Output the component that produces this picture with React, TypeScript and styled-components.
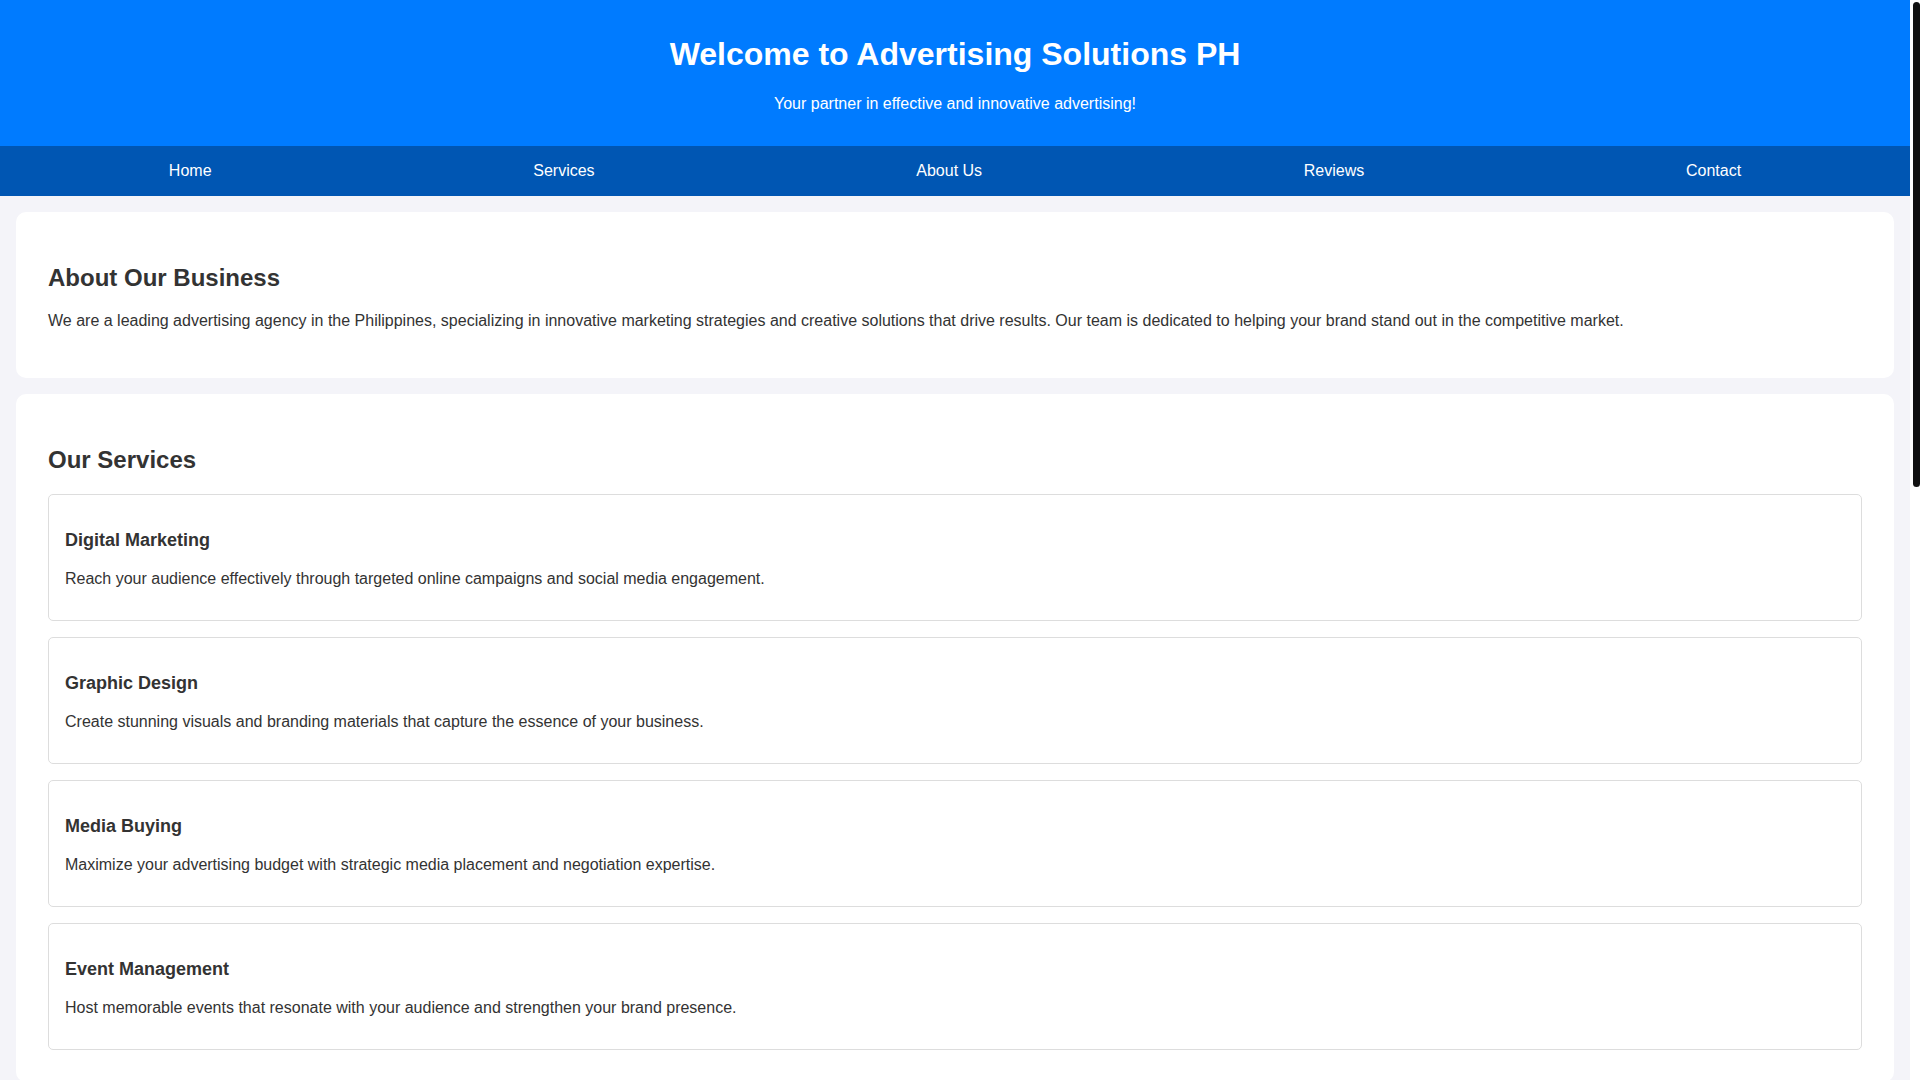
import styled, { createGlobalStyle } from 'styled-components'

const services = [
  {
    title: 'Digital Marketing',
    text: 'Reach your audience effectively through targeted online campaigns and social media engagement.',
  },
  {
    title: 'Graphic Design',
    text: 'Create stunning visuals and branding materials that capture the essence of your business.',
  },
  {
    title: 'Media Buying',
    text: 'Maximize your advertising budget with strategic media placement and negotiation expertise.',
  },
  {
    title: 'Event Management',
    text: 'Host memorable events that resonate with your audience and strengthen your brand presence.',
  },
]

const reviews = [
  { name: 'Maria Santos', text: '"Advertising Solutions PH transformed our online presence. Our sales doubled in just three months!"' },
  { name: 'John Reyes', text: '"Professional, creative and always on time. Highly recommended for any business."' },
  { name: 'Angela Cruz', text: '"Their event management team made our product launch a huge success."' },
  { name: 'Mark Villanueva', text: '"The best media buying partner we have worked with. Great value for our budget."' },
]

const navLinks = ['Home', 'Services', 'About Us', 'Reviews', 'Contact']

function App () {
  return (
    <>
      <GlobalStyle />
      <Header>
        <h1>Welcome to Advertising Solutions PH</h1>
        <p>Your partner in effective and innovative advertising!</p>
      </Header>
      <Nav>
        {navLinks.map(link => (
          <NavLink key={link} href={'#' + link.toLowerCase().replace(' ', '-')}>
            {link}
          </NavLink>
        ))}
      </Nav>

      <Section id="about-us">
        <h2>About Our Business</h2>
        <p>
          We are a leading advertising agency in the Philippines, specializing in innovative marketing
          strategies and creative solutions that drive results. Our team is dedicated to helping your brand
          stand out in the competitive market.
        </p>
      </Section>

      <Section id="services">
        <h2>Our Services</h2>
        <ItemList>
          {services.map(({ title, text }) => (
            <Item key={title}>
              <h3>{title}</h3>
              <p>{text}</p>
            </Item>
          ))}
        </ItemList>
      </Section>

      <Section id="reviews">
        <h2>Customer Reviews</h2>
        <ItemList>
          {reviews.map(({ name, text }) => (
            <Item key={name}>
              <h3>{name}</h3>
              <p>{text}</p>
            </Item>
          ))}
        </ItemList>
      </Section>

      <Section id="contact">
        <h2>Contact Us</h2>
        <p>Have a project in mind? Send us a message and we will get back to you shortly.</p>
        <ContactForm onSubmit={e => e.preventDefault()}>
          <Field>
            <label htmlFor="name">Name</label>
            <Input id="name" type="text" placeholder="Your name" />
          </Field>
          <Field>
            <label htmlFor="email">Email</label>
            <Input id="email" type="email" placeholder="you@example.com" />
          </Field>
          <Field>
            <label htmlFor="message">Message</label>
            <TextArea id="message" placeholder="Your message" />
          </Field>
          <SubmitButton type="submit">Send Message</SubmitButton>
        </ContactForm>
      </Section>

      <Footer>
        <p>&copy; 2024 Advertising Solutions PH. All rights reserved.</p>
      </Footer>

      {/* the reference shows the window scrollbar; drawn here as an overlay */}
      <ScrollTrack aria-hidden="true">
        <ScrollThumb />
      </ScrollTrack>
    </>
  )
}

const GlobalStyle = createGlobalStyle`
  html, body {
    margin: 0;
    padding: 0;
  }

  body {
    font-family: "Liberation Sans", Arial, sans-serif;
    background-color: #f4f4f9;
    color: #333;
    margin-right: 10px;
  }
`

const ScrollTrack = styled.div`
  position: fixed;
  top: 0;
  right: 0;
  width: 10px;
  height: 100vh;
  background-color: #fff;
`

const ScrollThumb = styled.div`
  margin: 2px 0 0 3px;
  width: 7px;
  height: 485px;
  border-radius: 4px;
  background-color: #111;
`

const Header = styled.header`
  background-color: #007bff;
  color: #fff;
  text-align: center;
  padding: 16px 16px 17px;

  h1 {
    font-size: 32px;
    margin: 20px 0 22px;
  }

  p {
    font-size: 16px;
    margin: 0 0 16px;
  }
`

const Nav = styled.nav`
  display: flex;
  justify-content: space-around;
  background-color: #0056b3;
  padding: 16px 8px;
`

const NavLink = styled.a`
  color: #fff;
  text-decoration: none;
  font-size: 16px;
  line-height: 18px;
`

const Section = styled.section`
  background-color: #fff;
  margin: 16px;
  padding: 32px;
  border-radius: 10px;

  h2 {
    font-size: 24px;
    margin: 20px 0;
  }

  > p {
    font-size: 16px;
    margin: 0 0 16px;
  }
`

const ItemList = styled.div`
  display: flex;
  flex-direction: column;
  gap: 16px;
`

const Item = styled.div`
  border: 1px solid #ddd;
  border-radius: 5px;
  padding: 16px;

  h3 {
    font-size: 18px;
    margin: 19px 0;
  }

  p {
    font-size: 16px;
    margin: 0 0 16px;
  }
`

const ContactForm = styled.form`
  display: flex;
  flex-direction: column;
  gap: 16px;
  max-width: 600px;
`

const Field = styled.div`
  display: flex;
  flex-direction: column;
  gap: 6px;

  label {
    font-weight: 700;
    font-size: 16px;
  }
`

const Input = styled.input`
  font-family: inherit;
  font-size: 16px;
  padding: 10px;
  border: 1px solid #ddd;
  border-radius: 5px;
`

const TextArea = styled.textarea`
  font-family: inherit;
  font-size: 16px;
  padding: 10px;
  height: 100px;
  border: 1px solid #ddd;
  border-radius: 5px;
  resize: vertical;
`

const SubmitButton = styled.button`
  align-self: flex-start;
  background-color: #007bff;
  color: #fff;
  font-family: inherit;
  font-size: 16px;
  border: none;
  border-radius: 5px;
  padding: 12px 24px;
  cursor: pointer;
`

const Footer = styled.footer`
  background-color: #0056b3;
  color: #fff;
  text-align: center;
  padding: 16px;

  p {
    margin: 0;
    font-size: 14px;
  }
`

export default App
